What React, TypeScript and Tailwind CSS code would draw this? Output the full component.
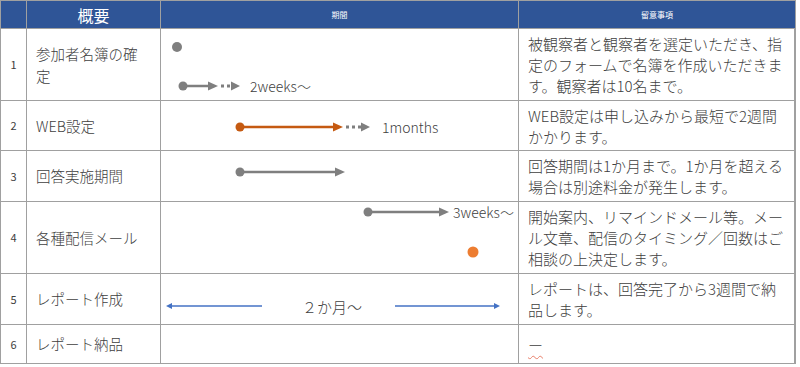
import React from "react";

const GRAY = "#7f7f7f";
const ORANGE = "#c55a11";
const LIGHT_ORANGE = "#ed7d31";
const BLUE = "#4472c4";

type Row = {
    no: number;
    title: React.ReactNode;
    note: React.ReactNode;
    height: string;
    chart: React.ReactNode;
};

// solid line with a dot on the left and a filled arrow head on the right
function Bar({ x1, x2, y, color }: { x1: number; x2: number; y: number; color: string }) {
    return (
        <g>
            <circle cx={x1} cy={y} r={4.5} fill={color} />
            <line x1={x1} y1={y} x2={x2 - 9} y2={y} stroke={color} strokeWidth={2.5} />
            <polygon points={`${x2 - 10},${y - 4.5} ${x2},${y} ${x2 - 10},${y + 4.5}`} fill={color} />
        </g>
    );
}

function DottedTail({ x1, x2, y }: { x1: number; x2: number; y: number }) {
    return (
        <g>
            <line x1={x1} y1={y} x2={x2 - 9} y2={y} stroke={GRAY} strokeWidth={3} strokeDasharray="3 3" />
            <polygon points={`${x2 - 9},${y - 4.5} ${x2},${y} ${x2 - 9},${y + 4.5}`} fill={GRAY} />
        </g>
    );
}

function Label({ x, y, children }: { x: number; y: number; children: React.ReactNode }) {
    return (
        <span
            className="absolute -translate-y-1/2 whitespace-nowrap text-[14px] leading-none text-[#404040]"
            style={{ left: x, top: y }}
        >
            {children}
        </span>
    );
}

const rows: Row[] = [
    {
        no: 1,
        height: "h-[72px]",
        title: (
            <>
                参加者名簿の確
                <br />
                定
            </>
        ),
        note: (
            <>
                被観察者と観察者を選定いただき、指
                <br />
                定のフォームで名簿を作成いただきま
                <br />
                す。観察者は10名まで。
            </>
        ),
        chart: (
            <>
                <svg className="absolute inset-0" width="357" height="71">
                    <circle cx={16} cy={18} r={5} fill={GRAY} />
                    <Bar x1={22} x2={57} y={57} color={GRAY} />
                    <DottedTail x1={60} x2={79} y={57} />
                </svg>
                <Label x={89} y={57}>2weeks～</Label>
            </>
        ),
    },
    {
        no: 2,
        height: "h-[50px]",
        title: "WEB設定",
        note: (
            <>
                WEB設定は申し込みから最短で2週間
                <br />
                かかります。
            </>
        ),
        chart: (
            <>
                <svg className="absolute inset-0" width="357" height="49">
                    <Bar x1={79} x2={182} y={26} color={ORANGE} />
                    <DottedTail x1={185} x2={209} y={26} />
                </svg>
                <Label x={221} y={26}>1months</Label>
            </>
        ),
    },
    {
        no: 3,
        height: "h-[51px]",
        title: "回答実施期間",
        note: (
            <>
                回答期間は1か月まで。1か月を超える
                <br />
                場合は別途料金が発生します。
            </>
        ),
        chart: (
            <svg className="absolute inset-0" width="357" height="50">
                <Bar x1={79} x2={184} y={21} color={GRAY} />
            </svg>
        ),
    },
    {
        no: 4,
        height: "h-[72px]",
        title: "各種配信メール",
        note: (
            <>
                開始案内、リマインドメール等。メー
                <br />
                ル文章、配信のタイミング／回数はご
                <br />
                相談の上決定します。
            </>
        ),
        chart: (
            <>
                <svg className="absolute inset-0" width="357" height="71">
                    <Bar x1={207} x2={288} y={10} color={GRAY} />
                    <circle cx={312} cy={50} r={5.5} fill={LIGHT_ORANGE} />
                </svg>
                <Label x={292} y={10}>3weeks～</Label>
            </>
        ),
    },
    {
        no: 5,
        height: "h-[51px]",
        title: "レポート作成",
        note: (
            <>
                レポートは、回答完了から3週間で納
                <br />
                品します。
            </>
        ),
        chart: (
            <>
                <svg className="absolute inset-0" width="357" height="50">
                    <line x1={10} y1={32} x2={101} y2={32} stroke={BLUE} strokeWidth={1.5} />
                    <polygon points="5,32 11,29 11,35" fill={BLUE} />
                    <line x1={234} y1={32} x2={334} y2={32} stroke={BLUE} strokeWidth={1.5} />
                    <polygon points="339,32 333,29 333,35" fill={BLUE} />
                </svg>
                <span className="absolute left-[141px] top-[32px] -translate-y-1/2 whitespace-nowrap text-[15px] leading-none text-[#404040]">
                    ２か月～
                </span>
            </>
        ),
    },
    {
        no: 6,
        height: "h-[39px]",
        title: "レポート納品",
        note: (
            <span className="underline decoration-wavy decoration-[#e8806a] decoration-1 underline-offset-4">ー</span>
        ),
        chart: null,
    },
];

export default function App() {
    return (
        <div className="min-h-screen bg-white font-['Noto_Sans_CJK_JP','Noto_Sans',sans-serif] font-light text-[#404040]">
            <div className="grid w-[796px] grid-cols-[26px_134px_358px_277px] border-l border-t border-[#a0a0a0]">
                {/* Header */}
                <div className="h-[28px] border-r border-b border-[#a0a0a0] bg-[#2f5597]" />
                <div className="flex h-[28px] items-center justify-center border-r border-b border-[#a0a0a0] bg-[#2f5597] text-[16px] font-normal text-white">
                    概要
                </div>
                <div className="flex h-[28px] items-center justify-center border-r border-b border-[#a0a0a0] bg-[#2f5597] text-[8px] font-normal text-white">
                    期間
                </div>
                <div className="flex h-[28px] items-center justify-center border-r border-b border-[#a0a0a0] bg-[#2f5597] text-[8px] font-normal text-white">
                    留意事項
                </div>

                {rows.map((row) => (
                    <React.Fragment key={row.no}>
                        <div className={`${row.height} flex items-center justify-center border-r border-b border-[#a0a0a0] text-[11px] font-normal`}>
                            {row.no}
                        </div>
                        <div className={`${row.height} flex items-center border-r border-b border-[#a0a0a0] pl-[9px] text-[14.5px] leading-[22px]`}>
                            <div>{row.title}</div>
                        </div>
                        <div className={`${row.height} relative border-r border-b border-[#a0a0a0]`}>
                            {row.chart}
                        </div>
                        <div className={`${row.height} flex items-center border-r-2 border-b border-[#a0a0a0] pl-[9px] text-[15px] leading-[21px] whitespace-nowrap`}>
                            <div>{row.note}</div>
                        </div>
                    </React.Fragment>
                ))}
            </div>
        </div>
    );
}
